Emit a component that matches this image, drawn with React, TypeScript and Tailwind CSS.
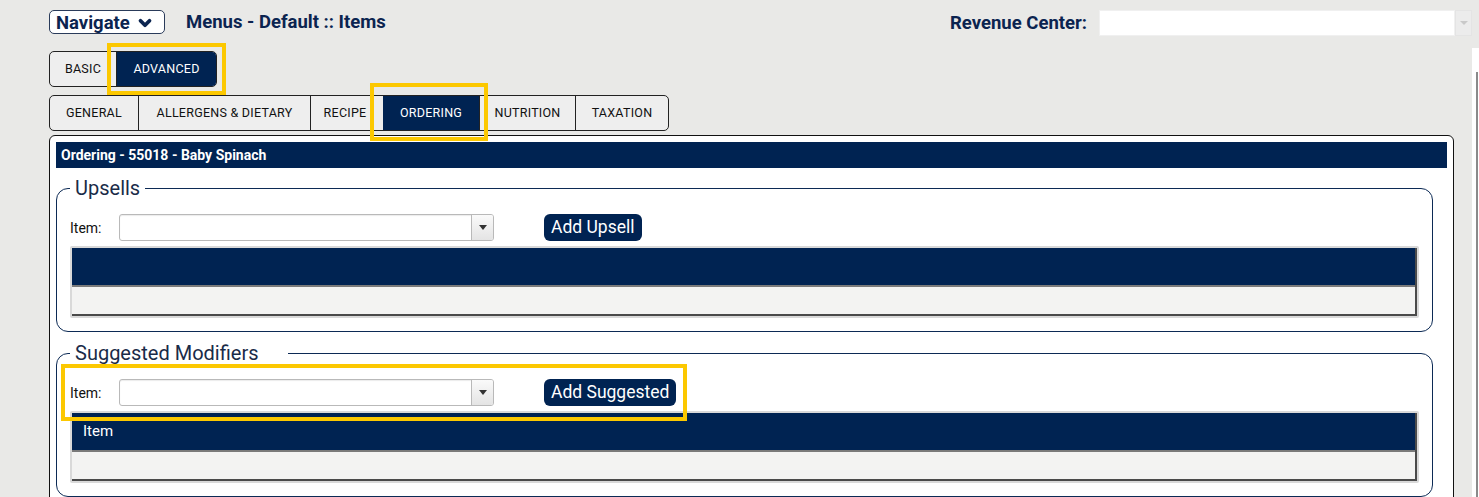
import { ChevronDown } from "lucide-react";

const navy = "bg-[#002352]";
const font = { fontFamily: "Roboto, 'Liberation Sans', sans-serif" };

const tabCls =
  "flex h-full items-center justify-center border-l border-[#222] text-[12.5px] uppercase tracking-[0.02em] text-[#111] first:border-l-0";

function Highlight({ className }: { className: string }) {
  return <span className={`pointer-events-none absolute border-4 border-[#fcc800] ${className}`} />;
}

function ItemSelect() {
  return (
    <div className="flex h-[27px] w-[375px] overflow-hidden rounded-[3px] border border-[#b9b9b9] bg-white shadow-[inset_0_1px_1px_rgba(0,0,0,0.08)]">
      <div className="flex-1" />
      <div className="flex w-[22px] items-center justify-center border-l border-[#b9b9b9] bg-gradient-to-b from-[#fafafa] to-[#e4e4e4]">
        <span className="h-0 w-0 border-x-[4px] border-t-[5px] border-x-transparent border-t-[#333]" />
      </div>
    </div>
  );
}

function Grid({ label }: { label?: string }) {
  return (
    <div className="rounded-[2px] bg-[#d9d9d9] p-[2px]">
      <div className="border-r-2 border-b-2 border-[#4a4a4a]">
        <div className={`flex h-[37px] items-center px-[11px] text-[15px] text-white ${navy}`}>{label}</div>
        <div className="h-[29px] border-t-2 border-[#7a7a7a] bg-[#f3f3f2]" />
      </div>
    </div>
  );
}

function Section({
  title,
  button,
  gridLabel,
  legendPad,
  highlight,
}: {
  title: string;
  button: string;
  gridLabel?: string;
  legendPad: string;
  highlight?: boolean;
}) {
  return (
    <fieldset className="mr-[14px] rounded-[12px] border border-[#0c2a55] px-[13px] pt-[14px] pb-[13px]">
      <legend className={`pl-[5px] text-[20px] leading-[24px] text-[#1a2b48] ${legendPad}`}>{title}</legend>
      <div className="relative flex items-center">
        <span className="w-[49px] pt-[2px] text-[14px] text-[#111]">Item:</span>
        <ItemSelect />
        <button className={`ml-[50px] h-[27px] rounded-[6px] px-[7px] text-[17.5px] leading-none text-white ${navy}`}>
          {button}
        </button>
        {highlight ? <Highlight className="-left-[9px] top-[-15px] h-[57px] w-[626px]" /> : null}
      </div>
      <div className="mt-[5px]">
        <Grid label={gridLabel} />
      </div>
    </fieldset>
  );
}

export default function App() {
  return (
    <div className="flex h-[497px] w-[1479px] overflow-hidden bg-[#e9e9e7]" style={font}>
      <div className="flex-1 pl-[49px]">
        {/* top bar */}
        <div className="flex h-[36px] items-start pt-[10px]">
          <button className="flex h-[24px] w-[116px] items-center gap-[6px] rounded-[5px] border border-[#2a3b5a] bg-white pt-[2px] pl-[6px] text-[18.5px] leading-none font-bold text-[#0b2450]">
            Navigate
            <ChevronDown size={18} strokeWidth={5} />
          </button>
          <span className="ml-[21px] pt-[1px] text-[18.5px] leading-[22px] font-bold text-[#0b2450]">Menus - Default :: Items</span>
          <div className="ml-auto flex items-center">
            <span className="mr-[12px] text-[18.5px] leading-[22px] font-bold text-[#0b2450]">Revenue Center:</span>
            <div className="flex h-[26px] w-[373px]">
              <div className="flex-1 border border-[#f0f0f0] bg-white" />
              <div className="flex w-[17px] items-center justify-center border border-[#e4e4e4] bg-[#ececec]">
                <span className="h-0 w-0 border-x-[4px] border-t-[4px] border-x-transparent border-t-[#c9c9c9]" />
              </div>
            </div>
          </div>
        </div>

        {/* mode tabs */}
        <div className="mt-[15px] flex h-[36px] w-fit rounded-[5px] border border-[#222] bg-[#eeeeee]">
          <div className={`${tabCls} w-[66px]`}>Basic</div>
          <div className={`relative ${tabCls} w-[100px] rounded-r-[4px] bg-[#002352] text-white`}>
            Advanced
            <Highlight className="-left-[10px] -right-[10px] -top-[9px] -bottom-[9px]" />
          </div>
        </div>

        {/* section tabs */}
        <div className="mt-[8px] flex h-[36px] w-fit rounded-[5px] border border-[#222] bg-[#eeeeee]">
          <div className={`${tabCls} w-[88px]`}>General</div>
          <div className={`${tabCls} w-[172px]`}>Allergens &amp; Dietary</div>
          <div className={`${tabCls} w-[69px]`}>Recipe</div>
          <div className={`relative ${tabCls} w-[100px] border-l-[4px] border-l-[#eeeeee] bg-[#002352] text-white`}>
            Ordering
            <Highlight className="-left-[13px] -right-[9px] -top-[13px] -bottom-[11px]" />
          </div>
          <div className={`${tabCls} w-[96px]`}>Nutrition</div>
          <div className={`${tabCls} w-[93px]`}>Taxation</div>
        </div>

        {/* panel */}
        <div className="mt-[4px] mr-[18px] h-[400px] rounded-t-[6px] border border-[#111] bg-white px-[6px] pt-[6px]">
          <div className={`flex h-[26px] items-center px-[5px] text-[14px] font-bold text-white ${navy}`}>
            Ordering - 55018 - Baby Spinach
          </div>
          <div className="mt-[8px]">
            <Section title="Upsells" button="Add Upsell" legendPad="pr-[5px]" />
          </div>
          <div className="mt-[9px]">
            <Section
              title="Suggested Modifiers"
              button="Add Suggested"
              gridLabel="Item"
              legendPad="pr-[30px]"
              highlight
            />
          </div>
        </div>
      </div>

      {/* scrollbar remnant */}
      <div className="mt-[48px] w-[7px] bg-white">
        <div className="ml-[4px] mt-[24px] h-full w-[2px] bg-[#8a8a8a]" />
      </div>
    </div>
  );
}
